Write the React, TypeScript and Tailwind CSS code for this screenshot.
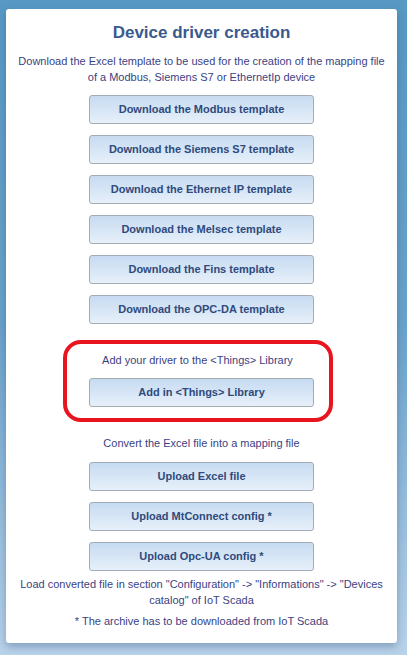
const downloads = [
  "Download the Modbus template",
  "Download the Siemens S7 template",
  "Download the Ethernet IP template",
  "Download the Melsec template",
  "Download the Fins template",
  "Download the OPC-DA template",
];

const uploads = ["Upload Excel file", "Upload MtConnect config *", "Upload Opc-UA config *"];

function Btn({ label, className = "" }: { label: string; className?: string }) {
  return (
    <button
      className={`w-[225px] h-[29px] rounded-[3px] border border-[#a3abb4] bg-gradient-to-b from-[#c6dbf1] to-[#e7f0fa] text-[11px] font-bold text-[#2f4a7c] ${className}`}
    >
      {label}
    </button>
  );
}

export default function App() {
  return (
    <div
      className="min-h-[655px] bg-gradient-to-b from-[#5799c4] via-[#6aa3cc] to-[#b9d3ea] pl-[6px] pr-[10px] pt-[9px] pb-[11px]"
      style={{ fontFamily: '"Liberation Sans", Arial, sans-serif' }}
    >
      <div className="flex flex-col items-center rounded-[3px] bg-white px-3 pt-[13px] pb-[14px] text-center shadow-[0_4px_8px_rgba(40,70,110,0.35)]">
        <h1 className="text-[17px] leading-[22px] font-bold text-[#3a5a8e]">Device driver creation</h1>
        <p className="mt-[9px] text-[11px] leading-[16px] text-[#3a3f85]">
          Download the Excel template to be used for the creation of the mapping file of a Modbus, Siemens S7 or
          EthernetIp device
        </p>

        <div className="mt-[10px] flex flex-col gap-[11px]">
          {downloads.map((d) => (
            <Btn key={d} label={d} />
          ))}
        </div>

        <div className="mt-[16px] ml-[-8px] flex w-[270px] flex-col items-center rounded-[18px] border-4 border-[#e8141e] pt-[8px] pb-[11px]">
          <p className="text-[11px] leading-[16px] text-[#3a3f85]">Add your driver to the &lt;Things&gt; Library</p>
          <Btn label="Add in <Things> Library" className="mt-[10px] ml-[8px]" />
        </div>

        <p className="mt-[13px] text-[11px] leading-[16px] text-[#3a3f85]">Convert the Excel file into a mapping file</p>
        <div className="mt-[11px] flex flex-col gap-[11px]">
          {uploads.map((u) => (
            <Btn key={u} label={u} />
          ))}
        </div>

        <p className="mt-[5px] text-[11px] leading-[16px] text-[#3a3f85]">
          Load converted file in section "Configuration" -&gt; "Informations" -&gt; "Devices catalog" of IoT Scada
        </p>
        <p className="mt-[5px] text-[11px] leading-[16px] text-[#3a3f85]">* The archive has to be downloaded from IoT Scada</p>
      </div>
    </div>
  );
}
